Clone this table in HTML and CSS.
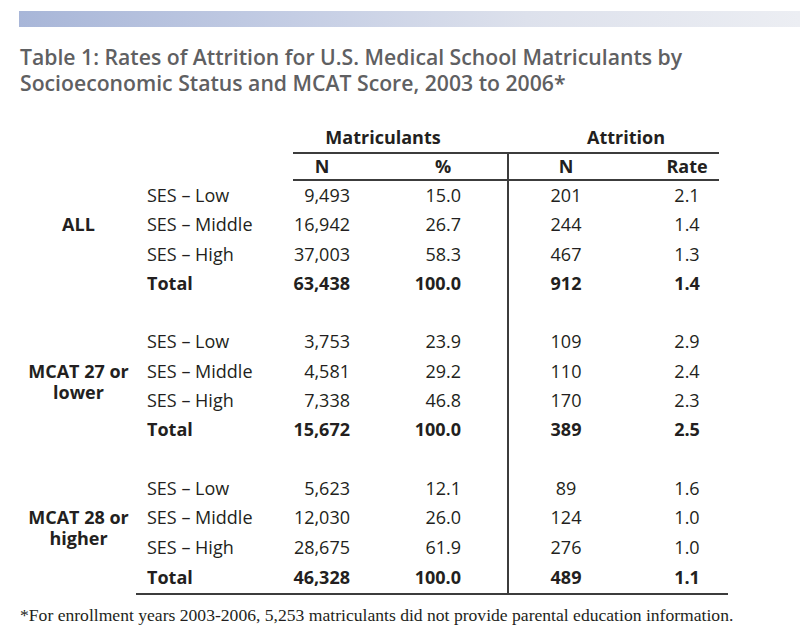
FILE: index.html
```html
<!DOCTYPE html>
<html lang="en">
<head>
<meta charset="utf-8">
<title>Table 1: Rates of Attrition</title>
<link rel="stylesheet" href="styles.css">
</head>
<body>
<div class="bar"></div>
<h1 class="title">Table 1: Rates of Attrition for U.S. Medical School Matriculants by<br>Socioeconomic Status and MCAT Score, 2003 to 2006*</h1>
<table class="data">
  <colgroup>
    <col class="c-grp"><col class="c-ses"><col class="c-mn"><col class="c-mp"><col class="c-an"><col class="c-ar"><col class="c-end">
  </colgroup>
  <thead>
    <tr class="hrow1">
      <th colspan="2"></th>
      <th colspan="2" class="hm">Matriculants</th>
      <th colspan="2" class="ha">Attrition</th>
      <th></th>
    </tr>
    <tr class="hrow2">
      <th colspan="2"></th>
      <th class="mn-h">N</th>
      <th class="mp-h">%</th>
      <th class="an an-h">N</th>
      <th class="ar-h">Rate</th>
      <th></th>
    </tr>
  </thead>
  <tbody>
    <tr><td></td><td class="ses">SES – Low</td><td class="mn">9,493</td><td class="mp">15.0</td><td class="an">201</td><td class="ar">2.1</td><td></td></tr>
    <tr><td rowspan="3" class="grp">ALL</td><td class="ses">SES – Middle</td><td class="mn">16,942</td><td class="mp">26.7</td><td class="an">244</td><td class="ar">1.4</td><td></td></tr>
    <tr><td class="ses">SES – High</td><td class="mn">37,003</td><td class="mp">58.3</td><td class="an">467</td><td class="ar">1.3</td><td></td></tr>
    <tr class="total"><td class="ses">Total</td><td class="mn">63,438</td><td class="mp">100.0</td><td class="an">912</td><td class="ar">1.4</td><td></td></tr>
    <tr class="gap"><td colspan="4"></td><td class="an"></td><td colspan="2"></td></tr>

    <tr><td></td><td class="ses">SES – Low</td><td class="mn">3,753</td><td class="mp">23.9</td><td class="an">109</td><td class="ar">2.9</td><td></td></tr>
    <tr><td rowspan="3" class="grp">MCAT 27 or<br>lower</td><td class="ses">SES – Middle</td><td class="mn">4,581</td><td class="mp">29.2</td><td class="an">110</td><td class="ar">2.4</td><td></td></tr>
    <tr><td class="ses">SES – High</td><td class="mn">7,338</td><td class="mp">46.8</td><td class="an">170</td><td class="ar">2.3</td><td></td></tr>
    <tr class="total"><td class="ses">Total</td><td class="mn">15,672</td><td class="mp">100.0</td><td class="an">389</td><td class="ar">2.5</td><td></td></tr>
    <tr class="gap"><td colspan="4"></td><td class="an"></td><td colspan="2"></td></tr>

    <tr><td></td><td class="ses">SES – Low</td><td class="mn">5,623</td><td class="mp">12.1</td><td class="an">89</td><td class="ar">1.6</td><td></td></tr>
    <tr><td rowspan="3" class="grp">MCAT 28 or<br>higher</td><td class="ses">SES – Middle</td><td class="mn">12,030</td><td class="mp">26.0</td><td class="an">124</td><td class="ar">1.0</td><td></td></tr>
    <tr><td class="ses">SES – High</td><td class="mn">28,675</td><td class="mp">61.9</td><td class="an">276</td><td class="ar">1.0</td><td></td></tr>
    <tr class="total last"><td class="ses">Total</td><td class="mn">46,328</td><td class="mp">100.0</td><td class="an">489</td><td class="ar">1.1</td><td class="end"></td></tr>
  </tbody>
</table>
<p class="note">*For enrollment years 2003-2006, 5,253 matriculants did not provide parental education information.</p>
</body>
</html>
```

FILE: styles.css
```css
html, body {
  margin: 0;
  padding: 0;
  background: #ffffff;
}

body {
  font-family: "Open Sans", "Noto Sans", sans-serif;
  color: #231f20;
}

.bar {
  height: 16px;
  margin: 11px 0 0 19px;
  background: linear-gradient(to right, #a8b6d8 0%, #c4cde4 35%, #dde1ec 65%, #eceef3 100%);
}

.title {
  margin: 17px 0 0 20px;
  font-size: 21.2px;
  line-height: 26px;
  font-weight: 600;
  color: #5f6062;
}

.data {
  margin: 26px 0 0 21px;
  width: 707px;
  table-layout: fixed;
  border-collapse: separate;
  border-spacing: 0;
  font-size: 18px;
}

.c-grp { width: 115px; }
.c-ses { width: 157px; }
.c-mn { width: 58px; }
.c-mp { width: 156px; }
.c-an { width: 116px; }
.c-ar { width: 96px; }
.c-end { width: 9px; }

.data th,
.data td {
  padding: 0;
  white-space: nowrap;
}

.data th {
  font-weight: 700;
}

.data .hrow1 th {
  height: 30px;
  line-height: 30px;
}

.data th.hm {
  text-align: center;
  padding-right: 34px;
  border-bottom: 2px solid #3c3c3c;
}

.data th.ha {
  text-align: center;
  padding-left: 26px;
  border-bottom: 2px solid #3c3c3c;
}

.data .hrow2 th {
  height: 25px;
  line-height: 25px;
}

.data th.mn-h,
.data th.mp-h,
.data th.an-h,
.data th.ar-h {
  border-bottom: 2px solid #3c3c3c;
  text-align: center;
}

.data th.mp-h { padding-left: 28px; }
.data th.ar-h { padding-left: 32px; }

.data tbody td {
  height: 29.3px;
  line-height: 29.3px;
  font-weight: 400;
}

.data .an {
  border-left: 2px solid #3c3c3c;
  text-align: center;
}

.data td.ses {
  padding-left: 11px;
  text-align: left;
}

.data td.mn {
  text-align: right;
  padding-right: 1px;
}

.data td.mp {
  text-align: right;
  padding-right: 46px;
}

.data td.ar {
  text-align: center;
  padding-left: 32px;
}

.data td.grp {
  vertical-align: top;
  text-align: center;
  font-weight: 700;
  line-height: 21px;
  padding-top: 4px;
}

.data .total td {
  font-weight: 700;
}

.data .last td {
  height: 31px;
  border-bottom: 2px solid #3c3c3c;
}

.note {
  margin: 10px 0 0 20px;
  font-family: "Liberation Serif", "Times New Roman", serif;
  font-size: 17.6px;
  line-height: 20px;
  color: #231f20;
  white-space: nowrap;
}
```
